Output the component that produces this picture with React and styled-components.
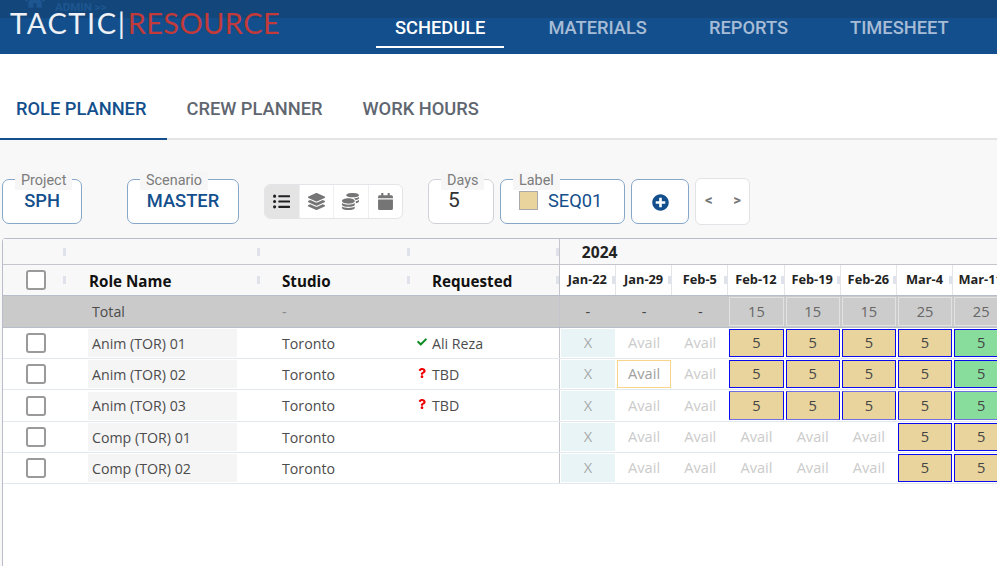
import React from 'react';
import styled, { createGlobalStyle } from 'styled-components';
import { FaHome, FaListUl, FaLayerGroup, FaCoins, FaCalendar, FaPlusCircle, FaCheck, FaQuestion } from 'react-icons/fa';

const GlobalStyle = createGlobalStyle`
  html, body { margin: 0; padding: 0; height: 100%; overflow: hidden; background: #f8f8f8; }
  * { box-sizing: border-box; }
  #root { height: 566px; width: 997px; overflow: hidden; }
`;

const Page = styled.div`
  width: 997px;
  height: 566px;
  overflow: hidden;
  display: flex;
  flex-direction: column;
  font-family: Roboto, sans-serif;
`;

const TopBar = styled.header`
  height: 54px;
  flex: none;
  display: flex;
  background: linear-gradient(#13477b 0, #13477b 18px, #134f8c 18px);
  position: relative;
  overflow: hidden;
`;

const AdminGhost = styled.div`
  position: absolute;
  left: 25px;
  top: 0;
  display: flex;
  align-items: flex-start;
  gap: 10px;
  height: 12px;
  font-size: 11.5px;
  line-height: 12px;
  font-weight: 700;
  color: #1d5690;
  svg { margin-top: -10px; }
  span { margin-top: 1px; }
`;

const Logo = styled.div`
  width: 376px;
  flex: none;
  padding: 6px 0 0 10px;
  font-family: Lato, sans-serif;
  font-weight: 400;
  font-size: 29px;
  line-height: 34px;
  letter-spacing: 1.6px;
  color: #eef1f5;
  white-space: nowrap;
  span { color: #c23a3a; letter-spacing: 0.4px; margin-left: 1px; }
`;

const MainNav = styled.nav`
  display: flex;
`;

const MainNavItem = styled.div`
  height: 48px;
  padding: 18px 19px 0;
  margin-right: ${p => p.$gap}px;
  font-size: 18.3px;
  line-height: 20px;
  font-weight: 500;
  color: ${p => (p.$active ? '#fff' : '#a7bcd6')};
  border-bottom: 2px solid ${p => (p.$active ? '#fff' : 'transparent')};
`;

const Tabs = styled.div`
  height: 86px;
  flex: none;
  background: #fff;
  display: flex;
  align-items: flex-end;
  border-bottom: 2px solid #e4e4e4;
`;

const Tab = styled.div`
  height: 85px;
  padding: 44px ${p => p.$pr}px 0 ${p => p.$pl}px;
  margin-bottom: -2px;
  font-size: 18.3px;
  line-height: 20px;
  font-weight: 500;
  color: ${p => (p.$active ? '#134f8c' : '#5f6670')};
  border-bottom: 2px solid ${p => (p.$active ? '#134f8c' : 'transparent')};
`;

const Toolbar = styled.div`
  height: 98px;
  flex: none;
  display: flex;
  padding: 39px 0 0 2px;
  align-items: flex-start;
`;

const Field = styled.div`
  position: relative;
  width: ${p => p.$w}px;
  height: 45px;
  margin-left: ${p => p.$ml || 0}px;
  flex: none;
  background: #fff;
  border: 1px solid ${p => (p.$plain ? '#cfd2d6' : '#86a7c8')};
  border-radius: 7px;
  display: flex;
  align-items: center;
  justify-content: ${p => (p.$pl ? 'flex-start' : 'center')};
  gap: 10px;
  padding: 0 0 3px ${p => p.$pl || 0}px;
  color: ${p => (p.$plain ? '#333' : '#134f8c')};
  font-weight: ${p => (p.$light ? 400 : 500)};
  font-size: ${p => (p.$plain ? 21 : 18.3)}px;
`;

const FieldLabel = styled.span`
  position: absolute;
  left: 12px;
  top: -8px;
  padding: 0 6px;
  height: 18px;
  background: #f6f6f6;
  font-size: 14.4px;
  line-height: 17px;
  font-weight: 400;
  color: #7c7c7c;
  white-space: nowrap;
`;

const Swatch = styled.span`
  width: 19px;
  height: 19px;
  background: #e8d49c;
  border: 1px solid #a9a9a9;
`;

const IconGroup = styled.div`
  display: flex;
  width: 139px;
  height: 35px;
  margin: 5px 0 0 25px;
  flex: none;
  background: #fff;
  border: 1px solid #e4e5e8;
  border-radius: 6px;
  overflow: hidden;
`;

const IconCell = styled.div`
  flex: 1;
  display: flex;
  align-items: center;
  justify-content: center;
  font-size: 17px;
  color: ${p => (p.$active ? '#222' : '#757575')};
  background: ${p => (p.$active ? '#e4e4e4' : 'transparent')};
  & + & { border-left: 1px solid #eeeff1; }
`;

const AddButton = styled.div`
  width: 58px;
  height: 45px;
  margin-left: 6px;
  flex: none;
  background: #fff;
  border: 1px solid #86a7c8;
  border-radius: 7px;
  display: flex;
  align-items: center;
  justify-content: center;
  padding-top: 2px;
  font-size: 17px;
  color: #134f8c;
`;

const Pager = styled.div`
  width: 55px;
  height: 47px;
  margin: -1px 0 0 6px;
  flex: none;
  display: flex;
  align-items: center;
  justify-content: space-between;
  padding: 0 8px 3px 9px;
  background: #fff;
  border: 1px solid #e2e3e6;
  border-radius: 6px;
  font-size: 15px;
  font-weight: 700;
  color: #777;
`;

const TableWrap = styled.div`
  margin-left: 2px;
  width: 1100px;
  flex: 1;
  background: #fff;
  border: 1px solid #b9bdc9;
  border-bottom: none;
  border-radius: 4px 0 0 0;
  font-family: "Open Sans", sans-serif;
  font-size: 14.2px;
  color: #4c4c4c;
`;

const Row = styled.div`
  display: flex;
  height: ${p => p.$h}px;
  background: ${p => p.$bg || 'transparent'};
  border-bottom: ${p => p.$line || '1px solid #e3e8ef'};
`;

const Left = styled.div`
  width: 556.8px;
  flex: none;
  display: flex;
  border-right: 1px solid #c4c6cc;
  height: 100%;
  background: ${p => p.$bg || 'transparent'};
`;

const Col = styled.div`
  position: relative;
  flex: none;
  width: ${p => p.$w}px;
  height: 100%;
  display: flex;
  align-items: center;
  padding-left: ${p => p.$pl || 0}px;
  padding-top: ${p => p.$pt || 0}px;
  gap: ${p => p.$gap || 0}px;
  color: ${p => p.$color || 'inherit'};
`;

const Handle = styled.i`
  position: absolute;
  right: ${p => p.$right || 0}px;
  top: ${p => p.$top}px;
  width: 3px;
  height: 8px;
  background: #dfe2ea;
`;

const HeadText = styled.span`
  font-weight: 700;
  font-size: 15.2px;
  color: #111;
`;

const YearText = styled.div`
  padding: 2px 0 0 22px;
  font-weight: 700;
  font-size: 15.6px;
  color: #222;
`;

const Week = styled.div`
  width: 56.2px;
  flex: none;
  position: relative;
  height: 100%;
  display: flex;
  align-items: center;
  justify-content: center;
  padding-bottom: 2px;
  font-size: 12.8px;
  font-weight: 700;
  color: #222;
  border-right: 1px solid #e4e5e8;
  background: #fff;
  &::after {
    content: '';
    position: absolute;
    right: 0;
    top: 11px;
    width: 3px;
    height: 8px;
    background: #dfe2ea;
  }
`;

const Box = styled.span`
  width: 20px;
  height: 20px;
  background: #fff;
  border: 2px solid #9a9a9a;
  border-radius: 3px;
`;

const RoleName = styled.div`
  width: 149px;
  height: 28px;
  margin-left: -1px;
  background: #f5f5f5;
  padding-left: 4px;
  display: flex;
  align-items: center;
`;

const Slot = styled.div`
  width: 56.2px;
  flex: none;
  padding: 1px;
  height: 100%;
  font-size: 14.6px;
`;

const SlotInner = styled.div`
  height: 100%;
  display: flex;
  align-items: center;
  justify-content: center;
  padding-bottom: 2px;
  background: ${p => ({ x: '#e8f4f6', booked: '#e8d49c', busy: '#88dc9c', total: '#cccccc' }[p.$kind] || 'transparent')};
  border: 1px solid ${p => ({ booked: '#0a0aee', busy: '#0a0aee', total: '#e2e2e2', focus: '#f8d488' }[p.$kind] || 'transparent')};
  border-top-color: ${p => (p.$soft ? '#6f6fe0' : '')};
  border-bottom-color: ${p => (p.$soft ? '#6f6fe0' : '')};
  color: ${p => ({ x: '#aaa', avail: '#cbcbcb', focus: '#a0a0a0', total: '#666', dash: '#444' }[p.$kind] || '#444')};
`;

const Stat = styled.span`
  display: inline-flex;
  justify-content: center;
  width: 10px;
  margin: -3px 0 0 1px;
  font-size: 10px;
  color: ${p => p.$color};
`;

const weeks = ['Jan-22', 'Jan-29', 'Feb-5', 'Feb-12', 'Feb-19', 'Feb-26', 'Mar-4', 'Mar-11'];
const totals = ['-', '-', '-', '15', '15', '15', '25', '25'];
const B = 'booked', G = 'busy', A = 'avail';

const rows = [
  { role: 'Anim (TOR) 01', who: 'Ali Reza', ok: true, h: 31, cells: [A, A, B, B, B, B, G] },
  { role: 'Anim (TOR) 02', who: 'TBD', h: 31, cells: ['focus', A, B, B, B, B, G] },
  { role: 'Anim (TOR) 03', who: 'TBD', h: 32, soft: true, cells: [A, A, B, B, B, B, G] },
  { role: 'Comp (TOR) 01', h: 31, cells: [A, A, A, A, A, B, B] },
  { role: 'Comp (TOR) 02', h: 31, cells: [A, A, A, A, A, B, B] },
];

const label = { avail: 'Avail', focus: 'Avail', booked: '5', busy: '5' };

export default function App() {
  return (
    <Page>
      <GlobalStyle />
      <TopBar>
        <AdminGhost><FaHome size={20} /><span>ADMIN &gt;&gt;</span></AdminGhost>
        <Logo>TACTIC|<span>RESOURCE</span></Logo>
        <MainNav>
          <MainNavItem $active $gap={25}>SCHEDULE</MainNavItem>
          <MainNavItem $gap={24}>MATERIALS</MainNavItem>
          <MainNavItem $gap={24}>REPORTS</MainNavItem>
          <MainNavItem>TIMESHEET</MainNavItem>
        </MainNav>
      </TopBar>
      <Tabs>
        <Tab $active $pl={16} $pr={21}>ROLE PLANNER</Tab>
        <Tab $pl={19} $pr={20}>CREW PLANNER</Tab>
        <Tab $pl={20} $pr={20}>WORK HOURS</Tab>
      </Tabs>
      <Toolbar>
        <Field $w={80}><FieldLabel>Project</FieldLabel>SPH</Field>
        <Field $w={112} $ml={45}><FieldLabel>Scenario</FieldLabel>MASTER</Field>
        <IconGroup>
          <IconCell $active><FaListUl /></IconCell>
          <IconCell><FaLayerGroup /></IconCell>
          <IconCell><FaCoins /></IconCell>
          <IconCell><FaCalendar /></IconCell>
        </IconGroup>
        <Field $w={66} $ml={25} $plain $light $pl={19}><FieldLabel>Days</FieldLabel>5</Field>
        <Field $w={125} $ml={6} $light $pl={18}><FieldLabel>Label</FieldLabel><Swatch />SEQ01</Field>
        <AddButton><FaPlusCircle /></AddButton>
        <Pager><span>&lt;</span><span>&gt;</span></Pager>
      </Toolbar>
      <TableWrap>
        <Row $h={26} $bg="#f8f8f8" $line="1px solid #c4c6cc">
          <Left>
            <Col $w={63}><Handle $top={9} /></Col>
            <Col $w={194}><Handle $top={9} /></Col>
            <Col $w={150}><Handle $top={9} /></Col>
            <Col $w={149.8}><Handle $top={9} $right={1} /></Col>
          </Left>
          <YearText>2024</YearText>
        </Row>
        <Row $h={31} $line="1px solid #b9bdc9">
          <Left $bg="#f8f8f8">
            <Col $w={63} $pl={23}><Box /><Handle $top={11} /></Col>
            <Col $w={194} $pl={23} $pt={2}><HeadText>Role Name</HeadText><Handle $top={11} /></Col>
            <Col $w={150} $pl={22} $pt={2}><HeadText>Studio</HeadText><Handle $top={11} /></Col>
            <Col $w={149.8} $pl={22} $pt={2}><HeadText>Requested</HeadText><Handle $top={11} $right={1} /></Col>
          </Left>
          {weeks.map(w => <Week key={w}>{w}</Week>)}
        </Row>
        <Row $h={32} $bg="#cacaca" $line="1px solid #b9bdc9">
          <Left>
            <Col $w={63} />
            <Col $w={194} $pl={26}>Total</Col>
            <Col $w={150} $pl={22} $color="#888">-</Col>
            <Col $w={149.8} />
          </Left>
          {totals.map((t, i) => (
            <Slot key={i}><SlotInner $kind={t === '-' ? 'dash' : 'total'}>{t}</SlotInner></Slot>
          ))}
        </Row>
        {rows.map(r => (
          <Row key={r.role} $h={r.h}>
            <Left>
              <Col $w={63} $pl={23}><Box /></Col>
              <Col $w={194} $pl={23}><RoleName>{r.role}</RoleName></Col>
              <Col $w={150} $pl={22}>Toronto</Col>
              <Col $w={149.8} $pl={6} $gap={5}>
                {r.who && (
                  <>
                    <Stat $color={r.ok ? '#0a8a1e' : '#ee0000'}>{r.ok ? <FaCheck /> : <FaQuestion />}</Stat>
                    {r.who}
                  </>
                )}
              </Col>
            </Left>
            <Slot><SlotInner $kind="x">X</SlotInner></Slot>
            {r.cells.map((c, i) => (
              <Slot key={i}><SlotInner $kind={c} $soft={r.soft && (c === B || c === G)}>{label[c]}</SlotInner></Slot>
            ))}
          </Row>
        ))}
      </TableWrap>
    </Page>
  );
}
